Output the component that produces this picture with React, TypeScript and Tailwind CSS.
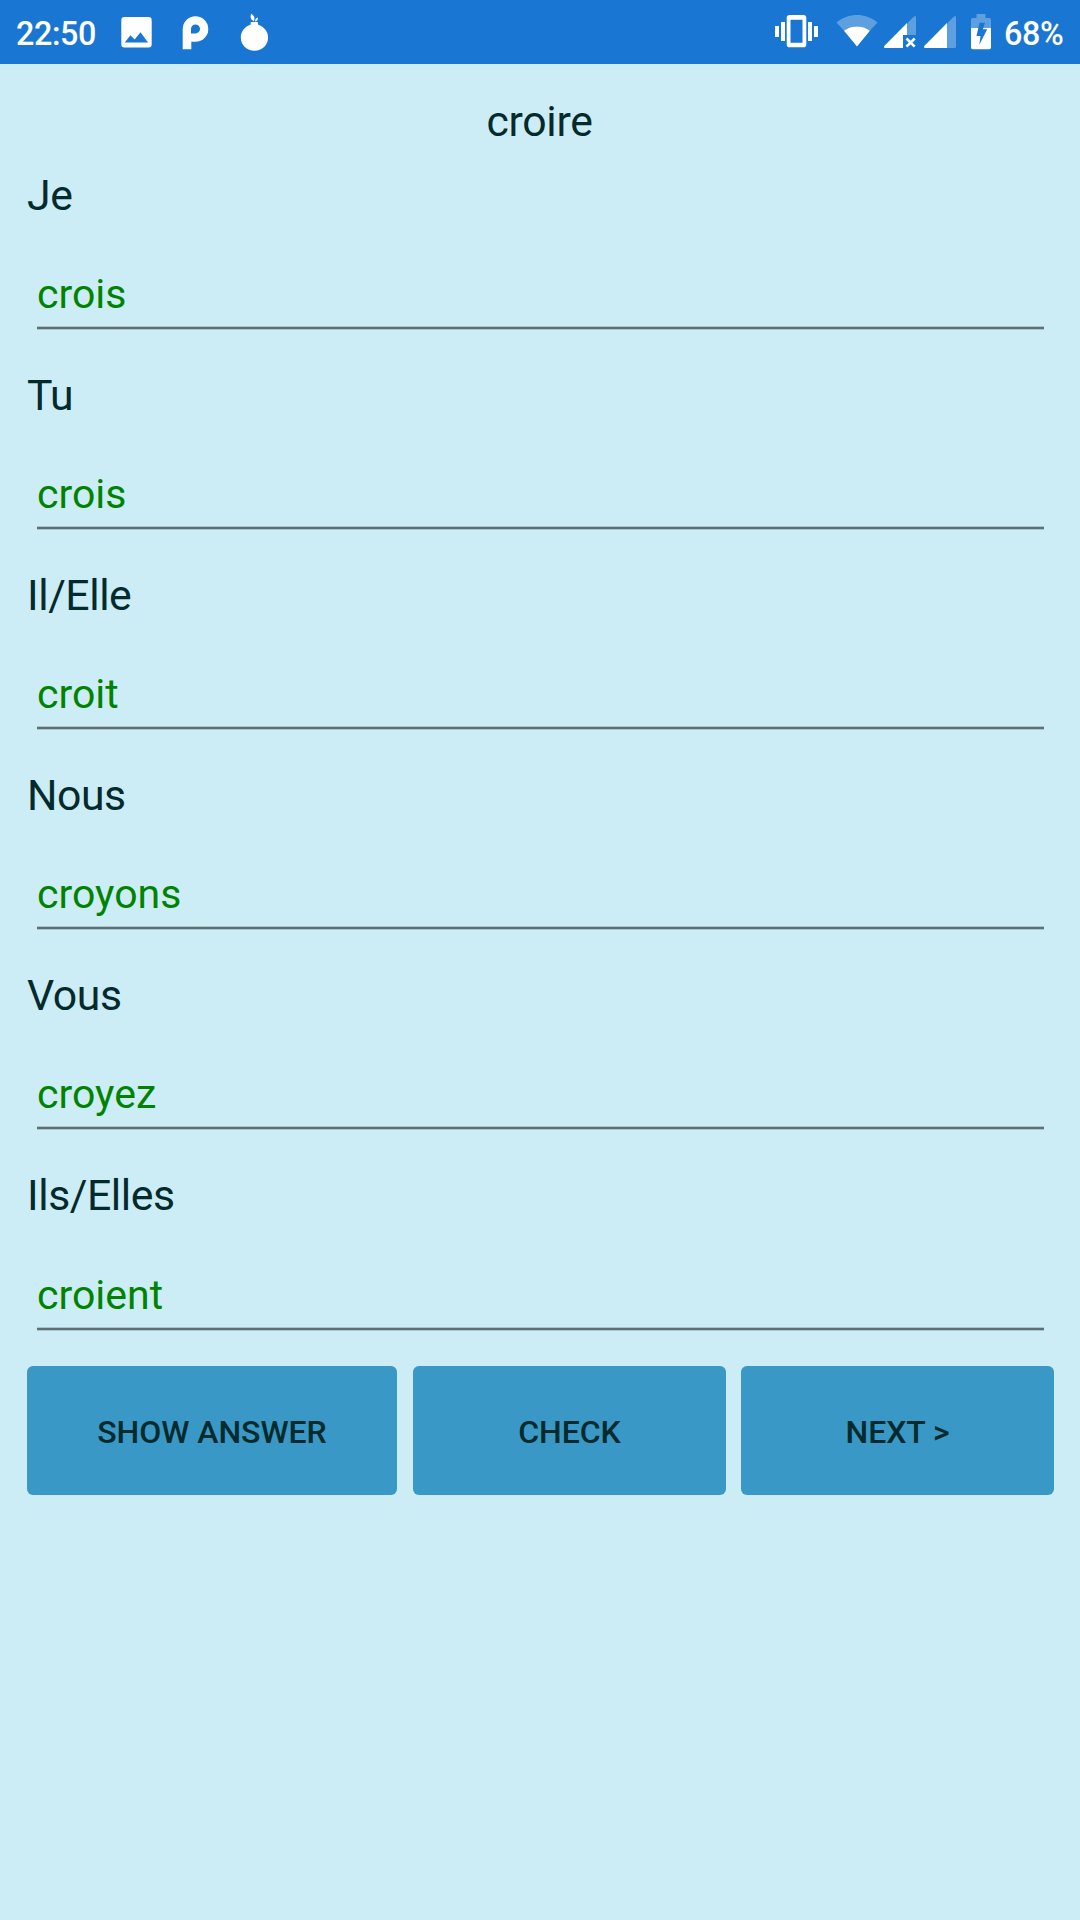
import React from "react";

const verbs = [
  { pronoun: "Je", answer: "crois" },
  { pronoun: "Tu", answer: "crois" },
  { pronoun: "Il/Elle", answer: "croit" },
  { pronoun: "Nous", answer: "croyons" },
  { pronoun: "Vous", answer: "croyez" },
  { pronoun: "Ils/Elles", answer: "croient" },
];

function NotificationIcons() {
  return (
    <svg className="ml-[16px] h-[64px] w-[170px] shrink-0" viewBox="112 0 170 64" fill="white">
      <path
        fillRule="evenodd"
        d="M124.5 17h24a3.2 3.2 0 0 1 3.2 3.2v24a3.2 3.2 0 0 1-3.2 3.2h-24a3.2 3.2 0 0 1-3.2-3.2v-24a3.2 3.2 0 0 1 3.2-3.2zM130.400 35.200l-5.600 7.200h23.200L140.500 32.200l-5.900 7.400z"
      />
      <path
        fillRule="evenodd"
        d="M182.7 49.2V29a12.8 12.8 0 1 1 12.8 12.8h-4.2v7.4zM195.5 24.4a4.5 4.5 0 0 0-4.5 4.5v4.5h4.5a4.5 4.5 0 0 0 0-9z"
      />
      <path d="M250.700 22h7.200v2.6c6 2 10.200 7 10.200 12.8 0 7.4-6 13.3-13.600 13.3S240.800 44.800 240.800 37.400c0-5.800 4-10.800 9.900-12.800z" />
      <path d="M251.300 13.800c3.200 1.900 3.900 4.400 2.500 7.400-3.200-1.500-4-4.500-2.500-7.400zM257.900 17.400c.2 2.600-.9 4.100-2.900 4.200-.1-2.300 1-3.700 2.900-4.200z" />
    </svg>
  );
}

function SystemIcons() {
  return (
    <svg className="h-[64px] w-[220px] shrink-0" viewBox="774 0 220 64" fill="white">
      <path d="M775 26h4v11h-4zM781 22h4v19h-4zM808 22h4v19h-4zM814 26h4v11h-4z" />
      <path
        fillRule="evenodd"
        d="M789.500 15h14a2.800 2.800 0 0 1 2.800 2.800v26.600a2.800 2.800 0 0 1-2.800 2.800h-14a2.800 2.800 0 0 1-2.800-2.800V17.800a2.800 2.800 0 0 1 2.800-2.800zM790.500 19.800v23h12v-23z"
      />
      <path opacity=".3" d="M836.500 22.500C848 12.500 866 12.500 877.500 22.500L869.900 30.800C863 25 851 25 844 30.800z" />
      <path d="M844 30.800C851 25 863 25 869.900 30.800L857 46.500z" />
      <path opacity=".3" d="M907 23.500L914 16.500Q916 15 916 17.500V35h-9z" />
      <path d="M884.500 45.800L907 23V35h-4v13H885.500Q883 48 884.500 45.800z" />
      <path d="M906.500 38.500l8.200 8.200M914.700 38.500l-8.200 8.200" stroke="white" strokeWidth="2.600" />
      <path opacity=".3" d="M947 23.500L954 16.500Q956 15 956 17.500V46.500Q956 48 954.500 48H947z" />
      <path d="M924.500 45.800L947 23v25H925.500Q923 48 924.500 45.800z" />
      <path opacity=".3" d="M976.500 14h9v4h3.800q1.700 0 1.700 1.700V28h-20v-8.300q0-1.700 1.700-1.700h3.800z" />
      <path d="M971 28h20v19.500q0 1.700-1.700 1.700h-16.600q-1.700 0-1.700-1.700z" />
      <path d="M979.500 22.700h5.500l-2.100 6.500h4.300l-7.900 15.500 1.200-8.700h-4z" fill="#1976d2" />
    </svg>
  );
}

function StatusBar() {
  return (
    <header className="flex h-[64px] items-center justify-between bg-[#1976d2] pl-4 pr-[17px] text-[32.300px] font-medium tracking-[-0.400px] text-white">
      <div className="flex items-center">
        <span className="w-[80px] whitespace-nowrap pt-[4px]">22:50</span>
        <NotificationIcons />
      </div>
      <div className="flex items-center">
        <SystemIcons />
        <span className="ml-[10px] w-[59px] whitespace-nowrap pt-[4px]">68%</span>
      </div>
    </header>
  );
}

function AnswerField({ pronoun, answer }: { pronoun: string; answer: string }) {
  return (
    <label className="group block h-[200px]">
      <span className="block h-[50px] text-[42.750px] leading-[50px] tracking-[-0.440px]">{pronoun}</span>
      <span className="mx-[10px] mt-[49px] block h-[57px] text-[41px] leading-[50px] text-[#008300] group-last:mt-[50px]">
        {answer}
      </span>
      <span className="mx-[10px] block h-[4px] border-y border-[#a9c4cb] bg-[#5d7075]" />
    </label>
  );
}

const buttonClass =
  "h-[129px] rounded-[6px] bg-[#3998c6] pt-[3px] text-[32px] font-medium uppercase tracking-[-0.050px] text-[#032b2d]";

export default function App() {
  return (
    <div className="min-h-[1920px] w-[1080px] bg-[#cdedf6] font-['Roboto',sans-serif] text-[#032b2d]">
      <StatusBar />
      <main className="pl-[27px] pr-[26px] pt-8">
        <h1 className="h-[74px] pr-[2px] text-center text-[42.750px] leading-[50px] tracking-[-0.300px]">croire</h1>
        <div className="h-[1196px]">
          {verbs.map((verb) => (
            <AnswerField key={verb.pronoun} {...verb} />
          ))}
        </div>
        <div className="flex">
          <button className={`${buttonClass} w-[370px]`}>Show answer</button>
          <button className={`${buttonClass} ml-4 w-[313px]`}>Check</button>
          <button className={`${buttonClass} ml-[15px] w-[313px]`}>Next &gt;</button>
        </div>
      </main>
    </div>
  );
}
